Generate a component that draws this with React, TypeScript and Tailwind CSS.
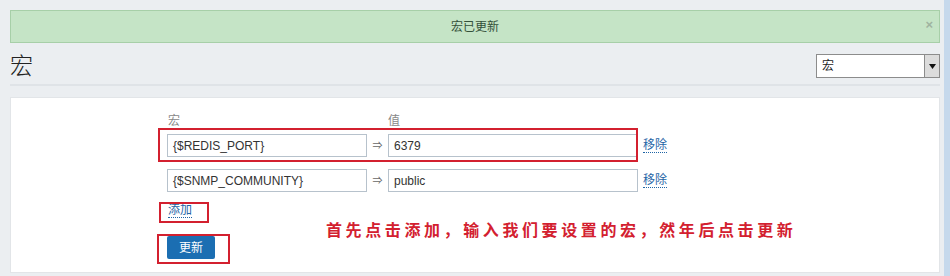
import React from "react";

const font = { fontFamily: '"Liberation Sans", Arial, "Noto Sans CJK SC", sans-serif' };

function MacroRow({ name, value }: { name: string; value: string }) {
  return (
    <div className="flex items-center">
      <div className="flex h-[23px] w-[200px] items-center border border-[#b7c2cc] bg-white px-[5px] text-[12px] text-[#333]">
        {name}
      </div>
      <div className="flex w-[21px] justify-center text-[10px] text-[#666]">⇒</div>
      <div className="flex h-[23px] w-[250px] items-center border border-[#b7c2cc] bg-white px-[5px] text-[12px] text-[#333]">
        {value}
      </div>
      <a className="ml-[5px] border-b border-dotted border-[#1f65a6] text-[12px] leading-[14px] text-[#1f65a6]">
        移除
      </a>
    </div>
  );
}

export default function App() {
  return (
    <div className="flex h-[276px] w-[950px] overflow-hidden bg-[#ebeef1]" style={font}>
      <div className="flex w-[944px] flex-col">
        {/* message */}
        <div className="relative ml-[10px] mt-[10px] flex h-[33px] w-[930px] items-center justify-center border border-[#a7cfa8] bg-[#c5e4c6] text-[12px] text-[#34503a]">
          宏已更新
          <span className="absolute right-[6px] top-[4px] text-[13px] font-bold text-[#9fb3a0]">×</span>
        </div>

        {/* header */}
        <div className="ml-[10px] mt-[11px] flex h-[24px] w-[930px] items-center justify-between">
          <span className="text-[23px] font-light leading-none text-[#222]">宏</span>
          <div className="flex h-[24px] w-[124px] border border-[#8c8c8c] bg-white">
            <span className="flex flex-1 items-center pl-[5px] text-[12px] text-[#222]">宏</span>
            <span className="flex w-[15px] items-center justify-center border-l border-[#8c8c8c] bg-[#dcdcdc]">
              <svg width="7" height="5" viewBox="0 0 7 5">
                <path d="M0 0h7L3.5 5z" fill="#111" />
              </svg>
            </span>
          </div>
        </div>
        <div className="ml-[10px] mt-[6px] h-[2px] w-[930px] bg-[#dfe3e7]" />

        {/* form panel */}
        <div className="relative ml-[10px] mt-[11px] h-[176px] w-[930px] border border-[#e2e5e8] bg-white pl-[156px] pt-[15px]">
          <div className="flex text-[12px] leading-[16px] text-[#888]">
            <span className="w-[221px] pl-[1px]">宏</span>
            <span>值</span>
          </div>
          <div className="mt-[5px] flex flex-col gap-[12px]">
            <MacroRow name="{$REDIS_PORT}" value="6379" />
            <MacroRow name="{$SNMP_COMMUNITY}" value="public" />
          </div>
          <div className="mt-[11px] flex">
            <a className="ml-[1px] border-b border-dotted border-[#1f65a6] text-[12px] leading-[14px] text-[#1f65a6]">
              添加
            </a>
          </div>
          <button className="mt-[18px] flex h-[23px] w-[48px] items-center justify-center rounded-[2px] bg-[#1b6eb2] text-[12px] text-white">
            更新
          </button>

          {/* annotations */}
          <div className="absolute left-[147px] top-[30px] h-[34px] w-[480px] border-2 border-[#d3202f]" />
          <div className="absolute left-[148px] top-[104px] h-[21px] w-[50px] border-2 border-[#d3202f]" />
          <div className="absolute left-[146px] top-[136px] h-[30px] w-[73px] border-2 border-[#d3202f]" />
          <span
            className="absolute left-[315px] top-[119px] text-[16px] font-bold tracking-[3.6px] text-[#d3202f]"
            style={{ fontFamily: '"Noto Sans CJK SC", sans-serif' }}
          >
            首先点击添加，输入我们要设置的宏，然年后点击更新
          </span>
        </div>
      </div>
      <div className="w-[6px] bg-[#c6d9ec]" />
    </div>
  );
}
